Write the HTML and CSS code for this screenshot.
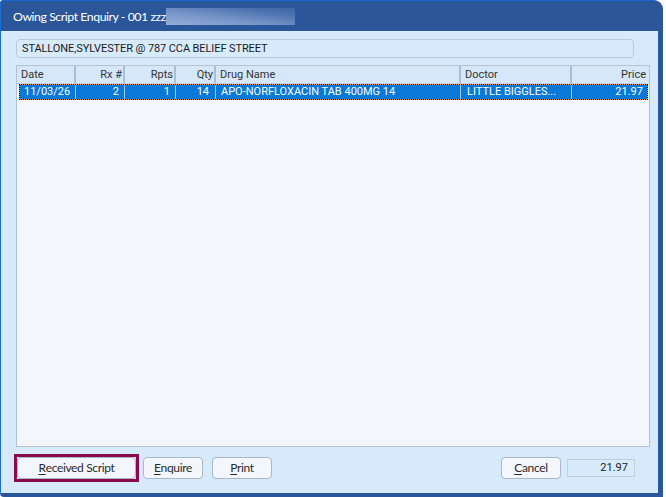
FILE: index.html
```html
<!DOCTYPE html>
<html>
<head>
<meta charset="utf-8">
<link rel="stylesheet" href="styles.css">
<title>Owing Script Enquiry</title>
</head>
<body>
<div class="window">
  <div class="titlebar">
    <span class="title-text">Owing Script Enquiry - 001 zzz</span><span class="redacted"></span>
  </div>
  <div class="client">
    <div class="name-field">STALLONE,SYLVESTER @ 787 CCA BELIEF STREET</div>
    <div class="grid">
      <div class="grid-head">
        <div class="hc">Date</div>
        <div class="hc r">Rx #</div>
        <div class="hc r">Rpts</div>
        <div class="hc r">Qty</div>
        <div class="hc">Drug Name</div>
        <div class="hc">Doctor</div>
        <div class="hc r last">Price</div>
      </div>
      <div class="grid-row selected">
        <div class="dc">11/03/26</div>
        <div class="dc r">2</div>
        <div class="dc r">1</div>
        <div class="dc r">14</div>
        <div class="dc">APO-NORFLOXACIN TAB 400MG 14</div>
        <div class="dc">LITTLE BIGGLES...</div>
        <div class="dc r last">21.97</div>
      </div>
    </div>
    <div class="buttons">
      <div class="default-frame"><div class="btn btn-default"><u>R</u>eceived Script</div></div>
      <div class="btn btn-small btn-enquire"><u>E</u>nquire</div>
      <div class="btn btn-small"><u>P</u>rint</div>
      <div class="spacer"></div>
      <div class="btn btn-small btn-cancel"><u>C</u>ancel</div>
      <div class="total">21.97</div>
    </div>
  </div>
</div>
</body>
</html>
```
FILE: styles.css
```css
* { box-sizing: border-box; }
html, body { margin: 0; padding: 0; background: #ffffff; }
body { width: 666px; height: 497px; overflow: hidden; }

.window {
  width: 663px;
  height: 497px;
  background: #2b579a;
  border-top: 1px solid #1b66cc;
  border-left: 1px solid #1f6ccf;
  border-right: 5px solid #2b579a;
  border-bottom: 4px solid #2b579a;
  border-radius: 3px 9px 0 4px;
  display: flex;
  flex-direction: column;
}

.titlebar {
  height: 30px;
  padding-left: 12px;
  display: flex;
  align-items: center;
  font-family: "Lato", "Liberation Sans", sans-serif;
  font-size: 12.3px;
  color: #ffffff;
}
.title-text { letter-spacing: -0.45px; }
.redacted {
  display: inline-block;
  width: 129px;
  height: 17px;
  margin-top: 1px;
  background: linear-gradient(to top right, #95aed7 0%, #7795c8 40%, #4a70ae 80%, #3d66a8 100%);
  filter: blur(0.6px);
}

.client {
  flex: 1;
  background: #d6eafb;
  padding: 8px 0 0 15px;
  display: flex;
  flex-direction: column;
  font-family: "Roboto", "Liberation Sans", sans-serif;
  font-size: 11px;
  color: #222;
}

.name-field {
  width: 618px;
  height: 19px;
  border: 1px solid #bccad8;
  border-radius: 4px;
  background: #d8ebfc;
  padding-left: 5px;
  line-height: 17px;
  color: #1a1a1a;
  letter-spacing: -0.1px;
}

.grid {
  margin-top: 7px;
  width: 634px;
  height: 382px;
  border: 1px solid #b7c2ce;
  background: #f4f6fd;
  display: flex;
  flex-direction: column;
}

.grid-head {
  height: 18px;
  display: grid;
  grid-template-columns: 59px 49px 51px 40px 245px 111px 1fr;
  background: #d5e7f8;
  border-bottom: 1px solid #c4d2e0;
  color: #333;
}
.hc {
  border-right: 2px solid #aabdd1;
  padding-left: 4px;
  padding-right: 1px;
  line-height: 17px;
  white-space: nowrap;
}
.hc.r { text-align: right; padding-right: 1px; }
.hc.last { border-right: none; padding-right: 3px; }

.grid-row {
  margin-left: 2px;
  margin-right: 1px;
  height: 16px;
  display: grid;
  grid-template-columns: 56px 49px 51px 40px 245px 111px 1fr;
  border: 1px dotted #000;
  background: #eea03a;
  color: #ffffff;
}
.grid-row .dc {
  background: #0a78d6;
  border-right: 1px solid #9ccaf0;
  line-height: 14px;
  padding-left: 4px;
  padding-right: 5px;
  white-space: nowrap;
}
.grid-row .dc:nth-child(5) { padding-left: 5px; }
.grid-row .dc:nth-child(6) { padding-left: 6px; }
.grid-row .dc.r { text-align: right; }
.grid-row .dc:nth-child(4) { padding-right: 6px; }
.grid-row .dc.last { border-right: none; padding-right: 4px; }

.buttons {
  margin-top: 7px;
  width: 619px;
  display: flex;
  align-items: center;
  font-family: "Lato", "Liberation Sans", sans-serif;
  font-size: 12px;
  letter-spacing: -0.35px;
  color: #2a2a2a;
}
.btn {
  height: 22px;
  border: 1px solid #a9b7c8;
  border-radius: 4px;
  background: #f4f6fd;
  display: flex;
  align-items: center;
  justify-content: center;
  padding-bottom: 1px;
}
.btn u { text-decoration-thickness: 1px; text-underline-offset: 2px; }
.default-frame {
  width: 125px;
  height: 28px;
  border: 3px solid #8b0a4e;
  margin-left: -2px;
  margin-right: 4px;
}
.btn-default { width: 119px; }
.btn-small { width: 60px; margin-right: 9px; }
.btn-cancel { margin-right: 6px; }
.spacer { flex: 1; }
.total {
  width: 68px;
  height: 18px;
  border: 1px solid #c2ceda;
  background: #d8ebfc;
  font-family: "Roboto", "Liberation Sans", sans-serif;
  font-size: 11px;
  letter-spacing: 0;
  text-align: right;
  line-height: 16px;
  padding-right: 6px;
  color: #222;
}
```
